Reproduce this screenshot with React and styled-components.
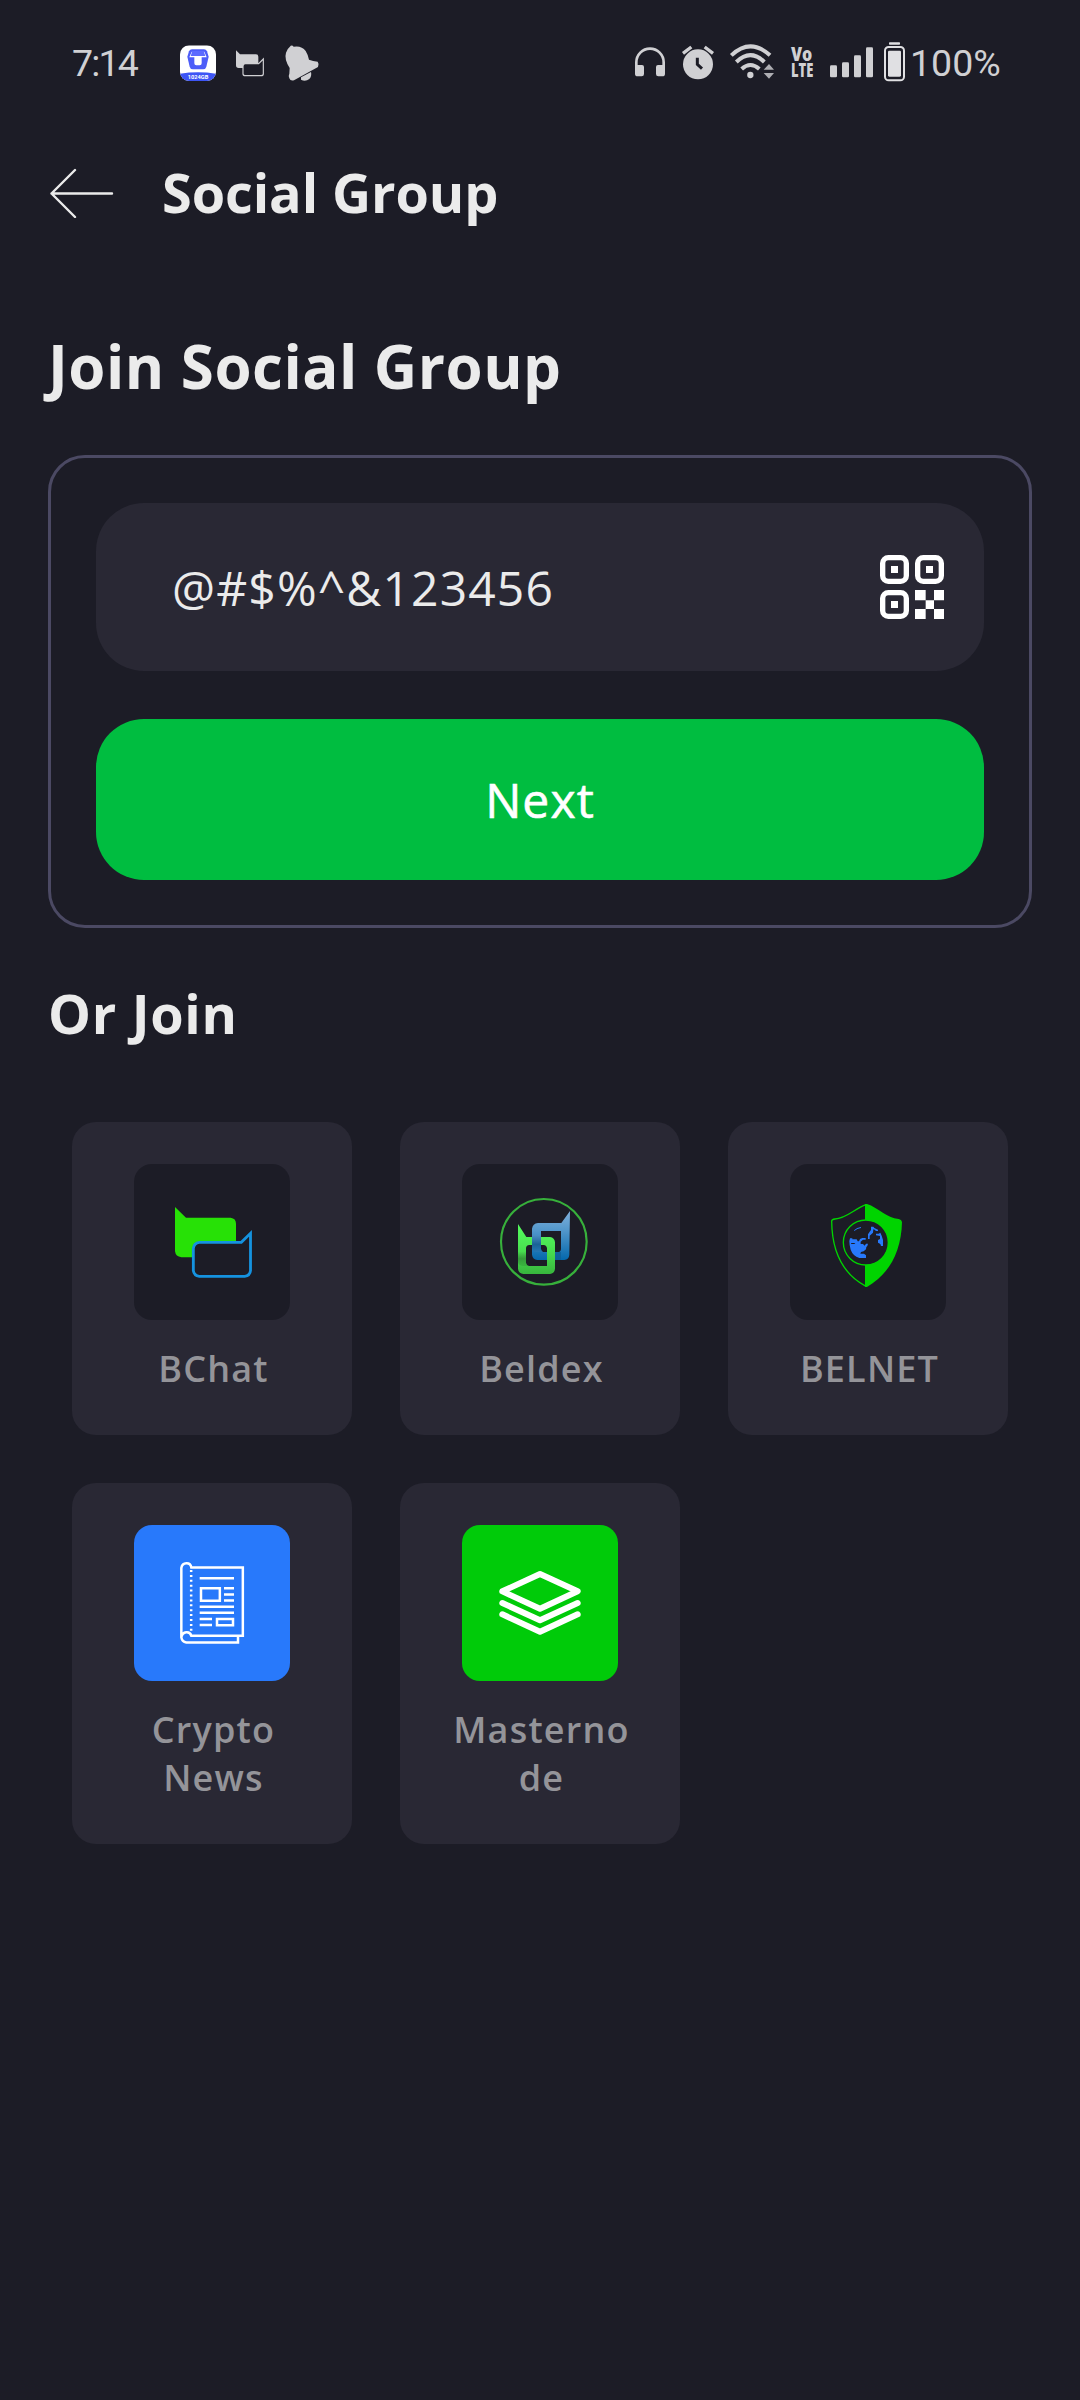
import React from "react";
import styled, { createGlobalStyle } from "styled-components";

const GlobalStyle = createGlobalStyle`
  * { box-sizing: border-box; }
  body { margin: 0; background: #1c1c26; }
  svg { display: block; flex: none; }
`;

const Screen = styled.div`
  width: 1080px;
  height: 2400px;
  overflow: hidden;
  background: #1c1c26;
  color: #ebebeb;
  font-family: "Open Sans", "Noto Sans", sans-serif;
`;

const StatusBar = styled.div`
  height: 125px;
  padding: 0 79px 0 72px;
  display: flex;
  justify-content: space-between;
  align-items: center;
`;

const StatusGroup = styled.div`
  display: flex;
  align-items: center;
`;

const StatusText = styled.span`
  font-family: Roboto, sans-serif;
  font-size: 37.5px;
  line-height: 44px;
  letter-spacing: ${(p) => p.$spacing || "0"};
  color: #d0d0d3;
  width: ${(p) => p.$width};
  padding-left: ${(p) => p.$inset || 0}px;
  white-space: nowrap;
`;

const StatusIcon = styled.svg`
  height: 44px;
  margin-left: ${(p) => p.$gap || 0}px;
  overflow: visible;
`;

const Header = styled.header`
  height: 136px;
  padding: 0 48px;
  display: flex;
  align-items: center;
`;

const HeaderTitle = styled.h1`
  margin: -2px 0 0 48px;
  font-size: 54px;
  line-height: 74px;
  font-weight: 700;
  letter-spacing: -0.08px;
`;

const Content = styled.main`
  padding: 64px 48px 0;
`;

const Title = styled.h2`
  margin: 0;
  font-size: 60px;
  line-height: 82px;
  font-weight: 700;
  letter-spacing: 0.5px;
`;

const JoinCard = styled.section`
  margin-top: 48px;
  height: 473px;
  padding: 45px;
  border: 3px solid #4b4963;
  border-radius: 37px;
  display: flex;
  flex-direction: column;
  gap: 48px;
`;

const Field = styled.div`
  height: 168px;
  padding: 0 40px 0 76px;
  border-radius: 48px;
  background: #292834;
  display: flex;
  align-items: center;
  justify-content: space-between;
  font-size: 48px;
  line-height: 65px;
  letter-spacing: 1.15px;
`;

const NextButton = styled.button`
  height: 161px;
  border: 0;
  padding: 0;
  border-radius: 48px;
  background: #00bd40;
  color: #fff;
  font: 500 48px/65px "Open Sans", "Noto Sans", sans-serif;
  letter-spacing: 1.1px;
  -webkit-text-stroke: 0.6px #fff;
`;

const SectionTitle = styled.h3`
  margin: 48px 0 0;
  font-size: 54px;
  line-height: 74px;
  font-weight: 700;
  letter-spacing: 0.7px;
`;

const Grid = styled.div`
  margin: 72px 24px 0;
  display: grid;
  grid-template-columns: repeat(3, 280px);
  gap: 48px;
`;

const Tile = styled.div`
  padding: 42px 42px 42px;
  border-radius: 24px;
  background: #292834;
  display: flex;
  flex-direction: column;
  align-items: center;
`;

const TileIcon = styled.div`
  width: 156px;
  height: 156px;
  border-radius: 18px;
  overflow: hidden;
  background: ${(p) => p.$bg || "#1c1c26"};
`;

const TileLabel = styled.div`
  margin-top: 25px;
  width: 196px;
  padding-left: 3px;
  text-align: center;
  font-size: 36px;
  line-height: 48px;
  font-weight: 600;
  letter-spacing: 1.2px;
  color: #949499;
  overflow-wrap: anywhere;
`;

const fg = "#d0d0d3";

const StorageAppIcon = () => (
  <StatusIcon $gap={31} width="36" viewBox="420 62 108 132">
    <defs>
      <clipPath id="app"><rect x="420" y="75" width="108" height="107" rx="27" /></clipPath>
    </defs>
    <g clipPath="url(#app)">
      <rect x="420" y="75" width="108" height="107" fill="#fff" />
      <path d="M420 160 Q474 152 528 160 V184 H420Z" fill="#3d55f5" />
    </g>
    <path d="M456 87 H492 Q498 87 501 93 L506 109 L499 139 Q497 147 489 147 H459 Q451 147 449 139 L442 109 L447 93 Q450 87 456 87Z" fill="#4d5df8" />
    <path d="M455 94 H493 L500 111 H485 V129 Q485 135 479 135 H469 Q463 135 463 129 V111 H448Z" fill="#fff" />
    <path d="M457 92 H491 L496 107 H452Z" fill="#5c6bff" />
    <text x="474" y="175" textAnchor="middle" fontFamily="Roboto, sans-serif" fontWeight="700" fontSize="17" textLength="62" lengthAdjust="spacingAndGlyphs" fill="#fff">1024GB</text>
  </StatusIcon>
);

const ChatStatusIcon = () => (
  <StatusIcon $gap={20} width="28" viewBox="588 62 84 132">
    <path d="M588 90 L600 102 H648 Q655 102 655 109 V143 H596 Q588 143 588 135Z" fill={fg} />
    <path d="M609 137 Q609 130 616 130 H656 L670 116 V160 Q670 166 663 166 H616 Q609 166 609 160Z" fill="#1c1c26" stroke={fg} strokeWidth="3.5" />
  </StatusIcon>
);

const BellIcon = () => (
  <StatusIcon $gap={21} width="34" viewBox="735 62 102 132">
    <path d="M783 171 L813 155 Q816 167 808 176 Q796 185 783 178Z" fill={fg} />
    <path d="M749 80 Q755 72 761 79 Q785 75 797 92 Q803 101 807 118 Q819 123 833 124 Q838 130 834 140 L762 180 Q751 183 748 174 Q744 168 748 160 L749 143 Q732 116 738 97 Q741 86 749 80Z" fill={fg} />
  </StatusIcon>
);

const HeadphonesIcon = () => (
  <StatusIcon width="30" viewBox="75 62 90 132">
    <path d="M79 148 V126 A41 41 0 0 1 161 126 V148" fill="none" stroke={fg} strokeWidth="8" />
    <path d="M75 134 H96 Q102 134 102 140 V161 Q102 168 95 168 H83 Q75 168 75 160Z M165 134 H144 Q138 134 138 140 V161 Q138 168 145 168 H157 Q165 168 165 160Z" fill={fg} />
  </StatusIcon>
);

const AlarmIcon = () => (
  <StatusIcon $gap={17} width="32" viewBox="216 62 96 132">
    <circle cx="264" cy="132" r="45" fill={fg} />
    <path d="M219 99 L244 80 M309 99 L284 80" stroke={fg} strokeWidth="10" />
    <path d="M262 112 V132 L276 145" fill="none" stroke="#1c1c26" strokeWidth="9" />
  </StatusIcon>
);

const WifiIcon = () => (
  <StatusIcon $gap={16} width="44" viewBox="360 62 132 132">
    <g fill="none" stroke={fg} strokeWidth="12">
      <path d="M364 105 Q421 51 480 105" />
      <path d="M379 125 Q421 84 463 125" />
      <path d="M395 146 Q421 122 448 146" />
    </g>
    <circle cx="421" cy="164" r="9.5" fill={fg} />
    <path d="M477 131 L492 148 H461Z M461 158 H492 L477 175Z" fill="#aeaeb3" />
  </StatusIcon>
);

const VolteIcon = () => (
  <StatusIcon $gap={17} width="22" viewBox="543 62 66 132">
    <g fontFamily="Open Sans, sans-serif" fontWeight="800" fill={fg}>
      <text x="543" y="122" fontSize="56" textLength="64" lengthAdjust="spacingAndGlyphs">Vo</text>
      <text x="543" y="170" fontSize="58" textLength="67" lengthAdjust="spacingAndGlyphs">LTE</text>
    </g>
  </StatusIcon>
);

const SignalIcon = () => (
  <StatusIcon $gap={17} width="43" viewBox="660 62 129 132">
    <g fill={fg}>
      <rect x="660" y="135" width="21" height="36" rx="4" />
      <rect x="696" y="126" width="21" height="45" rx="4" />
      <rect x="732" y="105" width="21" height="66" rx="4" />
      <rect x="768" y="81" width="21" height="90" rx="4" />
    </g>
  </StatusIcon>
);

const BatteryIcon = () => (
  <StatusIcon $gap={11} width="21" viewBox="822 62 63 132">
    <rect x="837" y="66" width="33" height="7" rx="2" fill="#e0e0e3" />
    <rect x="825" y="80" width="57" height="100" rx="11" fill="none" stroke="#e0e0e3" strokeWidth="6" />
    <rect x="834" y="91" width="39" height="78" rx="4" fill="#e0e0e3" />
  </StatusIcon>
);

const BackArrow = () => (
  <svg width="66" height="50" viewBox="0 0 66 50" fill="none" stroke="#ebebeb" strokeWidth="2.4" strokeLinecap="round" strokeLinejoin="round">
    <path d="M27 2 L3.5 25.5 L27 49 M3.5 25.5 H64" />
  </svg>
);

const Finder = ({ x, y }) => (
  <>
    <rect x={x + 8} y={y + 8} width="71" height="71" rx="17" fill="none" stroke="#fff" strokeWidth="16" />
    <rect x={x + 33} y={y + 33} width="21" height="21" fill="#fff" />
  </>
);

const QrIcon = () => (
  <svg width="64" height="64" viewBox="0 0 192 192">
    <Finder x={0} y={0} />
    <Finder x={105} y={0} />
    <Finder x={0} y={105} />
    <path fill="#fff" d="M105 105h32v31h-32z M162 105h30v31h-30z M137 136h25v26h-25z M105 162h32v30h-32z M162 162h30v30h-30z" />
  </svg>
);

const BChatLogo = () => (
  <svg width="156" height="156" viewBox="222 162 468 468">
    <path d="M345 291 L378 323 H512 Q528 325 528 341 V442 H364 Q347 440 345 424Z" fill="#27e106" />
    <path d="M400 415 Q402 399 418 397 H544 L571.500 370 V482 Q570 497 554 499 H418 Q402 497 400 482Z" fill="#1c1c26" stroke="#1592df" strokeWidth="8.500" />
  </svg>
);

const BeldexLogo = () => (
  <svg width="156" height="156" viewBox="216 162 468 468">
    <defs>
      <linearGradient id="blue" x1="0" y1="0" x2="0" y2="1">
        <stop offset="0" stopColor="#80b0db" />
        <stop offset="0.4" stopColor="#5297cb" />
        <stop offset="1" stopColor="#0468ac" />
      </linearGradient>
      <linearGradient id="green" x1="0" y1="0" x2="0" y2="1">
        <stop offset="0" stopColor="#54fc5e" />
        <stop offset="0.45" stopColor="#4be552" />
        <stop offset="1" stopColor="#38b63d" />
      </linearGradient>
      <linearGradient id="blueShade" x1="0" y1="0" x2="0" y2="1">
        <stop offset="0" stopColor="#4d90c4" />
        <stop offset="0.55" stopColor="#1a6296" />
        <stop offset="1" stopColor="#2478b5" />
      </linearGradient>
      <linearGradient id="greenShade" x1="0" y1="0" x2="0" y2="1">
        <stop offset="0" stopColor="#35993a" stopOpacity="0" />
        <stop offset="0.5" stopColor="#35993a" />
        <stop offset="1" stopColor="#35a83a" stopOpacity="0.6" />
      </linearGradient>
    </defs>
    <circle cx="461.500" cy="395.500" r="128.500" fill="none" stroke="#37b03b" strokeWidth="6.5" />
    <path fillRule="evenodd" fill="url(#blue)" d="M540 303 L514 339 H444 Q428 341 426 356 V434 Q428 448 442 450 H523 Q537 448 538 434Z M453 363 H513 V416 Q513 426 503 426 H463 Q453 426 453 416Z" />
    <path d="M495 426 H513 V450 H495Z" fill="#105c91" opacity=".7" />
    <path fillRule="evenodd" fill="url(#green)" d="M384 342 L409 381 H480 Q494 383 495 397 V476 Q494 490 480 492 H400 Q385 490 384 476Z M418 405 Q408 406 408 415 V458 Q409 467 418 468 H471 V415 Q470 406 461 405Z" />
    <path d="M384 425 H408 V458 Q409 467 418 468 H398 Q385 466 384 456Z" fill="url(#greenShade)" />
    <path d="M426 375 H453 V416 Q454 426 463 426 H440 Q426 425 426 414Z" fill="url(#blueShade)" />
  </svg>
);

const BelnetLogo = () => (
  <svg width="156" height="156" viewBox="210 162 468 468">
    <path d="M438 284 C404 296 378 326 345 327 Q335 328 335 334 C336 420 364 490 438 529" fill="none" stroke="#00d400" strokeWidth="4" />
    <path d="M435 282 H441 C474 292 500 325 536 327 Q545 329 546 336 C544 425 508 492 441 531 H435Z" fill="#00d400" />
    <circle cx="437.500" cy="397.500" r="67.500" fill="#1c1c26" stroke="#00d400" strokeWidth="4" />
    <g fill="#2879fb">
      <path d="M402 361 Q411 352 423 351 V354 Q411 355 403 363Z" />
      <path d="M390 385 H397 V388 H410 L413 394 H417 L420 387 L427 384 H437 V389 H429 L422 395 V402 H429 L434 407 L438 401 H444 L442 408 L439 411 L438 418 L431 424 L423 426 L421 431 H432 L438 436 V444 H418 Q399 438 392 419 Q388 405 388 393Z" />
      <path d="M453 350 H460 L463 354 L474 359 V363 H468 L464 359 L460 358 L459 368 L454 373 L449 377 V387 H444 V373 L449 365 L453 360Z" />
      <path d="M468 371 H476 L481 368 L485 377 L489 390 V408 H483 L481 402 L474 398 V390 L480 387 L480 378 L468 376Z" />
    </g>
    <path d="M393 399 H403 L406 402 H394Z" fill="#1c1c26" />
  </svg>
);

const NewsLogo = () => (
  <svg width="156" height="156" viewBox="222 165 468 468" fill="none" stroke="#fff" strokeWidth="7.5">
    <path d="M364 502 V294 C367 276 391 275 394 292.500 H548.500 V497.500 H394 C390 482 367 483 364 502 Q366 515 379 517.500 H534 V498" />
    <path d="M393.500 300 V484" strokeDasharray="6 8.700" />
    <path d="M419 325 H522 M492 355 H522 M492 373.500 H522 M492 391.500 H522 M419 410 H522 M419 428 H522 M419 447 H456 M419 465 H456" />
    <path d="M423 354.500 H479.500 V392 H423Z M471 447 H519 V465.500 H471Z" />
  </svg>
);

const LayersLogo = () => (
  <svg width="156" height="156" viewBox="216 165 468 468" fill="none" stroke="#fff" strokeWidth="18" strokeLinecap="round" strokeLinejoin="round">
    <path d="M337 364 L450 312 L563 364 L450 416Z M337 399 L450 451 L563 399 M337 433 L450 485 L563 433" />
  </svg>
);

const groups = [
  { name: "BChat", Logo: BChatLogo },
  { name: "Beldex", Logo: BeldexLogo },
  { name: "BELNET", Logo: BelnetLogo },
  { name: "Crypto News", Logo: NewsLogo, bg: "#2879fb" },
  { name: "Masternode", Logo: LayersLogo, bg: "#00cb09" },
];

export default function App() {
  return (
    <Screen>
      <GlobalStyle />
      <StatusBar>
        <StatusGroup>
          <StatusText $width="77px" $spacing="-1.8px">7:14</StatusText>
          <StorageAppIcon />
          <ChatStatusIcon />
          <BellIcon />
        </StatusGroup>
        <StatusGroup>
          <HeadphonesIcon />
          <AlarmIcon />
          <WifiIcon />
          <VolteIcon />
          <SignalIcon />
          <BatteryIcon />
          <StatusText $width="96px" $inset={5}>100%</StatusText>
        </StatusGroup>
      </StatusBar>
      <Header>
        <BackArrow />
        <HeaderTitle>Social Group</HeaderTitle>
      </Header>
      <Content>
        <Title>Join Social Group</Title>
        <JoinCard>
          <Field>
            <span>@#$%^&amp;123456</span>
            <QrIcon />
          </Field>
          <NextButton>Next</NextButton>
        </JoinCard>
        <SectionTitle>Or Join</SectionTitle>
        <Grid>
          {groups.map(({ name, Logo, bg }) => (
            <Tile key={name}>
              <TileIcon $bg={bg}><Logo /></TileIcon>
              <TileLabel>{name}</TileLabel>
            </Tile>
          ))}
        </Grid>
      </Content>
    </Screen>
  );
}
